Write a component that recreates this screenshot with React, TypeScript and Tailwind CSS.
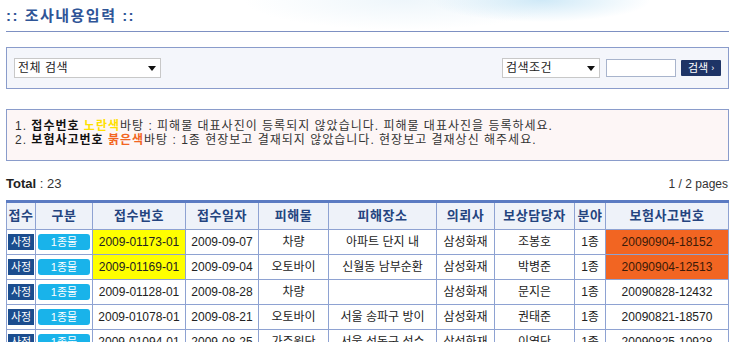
import React from 'react';

type Row = {
  no: string;
  date: string;
  item: string;
  place: string;
  company: string;
  manager: string;
  kind: string;
  accident: string;
  noPhoto?: boolean;
  noReport?: boolean;
};

const ROWS: Row[] = [
  { no: '2009-01173-01', date: '2009-09-07', item: '차량', place: '아파트 단지 내', company: '삼성화재', manager: '조봉호', kind: '1종', accident: '20090904-18152', noPhoto: true, noReport: true },
  { no: '2009-01169-01', date: '2009-09-04', item: '오토바이', place: '신월동 남부순환', company: '삼성화재', manager: '박병준', kind: '1종', accident: '20090904-12513', noPhoto: true, noReport: true },
  { no: '2009-01128-01', date: '2009-08-28', item: '차량', place: '', company: '삼성화재', manager: '문지은', kind: '1종', accident: '20090828-12432' },
  { no: '2009-01078-01', date: '2009-08-21', item: '오토바이', place: '서울 송파구 방이', company: '삼성화재', manager: '권태준', kind: '1종', accident: '20090821-18570' },
  { no: '2009-01094-01', date: '2009-08-25', item: '가주원단', place: '서울 성동구 성수', company: '삼성화재', manager: '이영단', kind: '1종', accident: '20090825-10928' },
];

const HEADERS = ['접수', '구분', '접수번호', '접수일자', '피해물', '피해장소', '의뢰사', '보상담당자', '분야', '보험사고번호'];
const WIDTHS = [29, 57, 93, 73, 70, 108, 58, 80, 31, 123];

const FONT = "font-['Liberation_Sans','Noto_Sans_CJK_KR',sans-serif]";

function Arrow() {
  return (
    <svg width="8" height="5" viewBox="0 0 8 5" className="shrink-0">
      <path d="M0 0h8L4 5z" fill="#111" />
    </svg>
  );
}

export default function App() {
  return (
    <div className={`w-[733px] h-[342px] overflow-hidden bg-white ${FONT} text-[12px] text-[#333]`}>
      <div className="px-[6px] pr-[4px]">
        {/* title */}
        <div className="h-[32px] border-b border-[#7d90c2] bg-[radial-gradient(ellipse_110px_22px_at_74%_0%,#cfe9f7,transparent),radial-gradient(ellipse_160px_30px_at_55%_0%,#eef6fb,transparent)] pt-[5px]">
          <span className="text-[15px] font-bold text-[#2f5597] tracking-[1.5px]">:: 조사내용입력 ::</span>
        </div>

        {/* search */}
        <div className="mt-[15px] h-[42px] border border-[#8a9ccb] bg-[#f4f6fb] flex items-center px-[7px]">
          <div className="w-[147px] h-[20px] bg-white border border-[#c8c8c8] flex items-center justify-between pl-[3px] pr-[4px]">
            <span className="text-[12px] text-[#222] tracking-[0.5px]">전체 검색</span>
            <Arrow />
          </div>
          <div className="ml-auto flex items-center">
            <div className="w-[98px] h-[20px] bg-white border border-[#c8c8c8] flex items-center justify-between pl-[3px] pr-[4px]">
              <span className="text-[12px] text-[#222] tracking-[0.5px]">검색조건</span>
              <Arrow />
            </div>
            <div className="ml-[6px] w-[70px] h-[18px] bg-white border border-[#a8b4cc]" />
            <div className="ml-[5px] w-[40px] h-[16px] bg-[#1e3466] text-white text-[11px] leading-[16px] flex items-center justify-center rounded-[1px]">
              검색 <span className="ml-[3px] text-[9px]">›</span>
            </div>
          </div>
        </div>

        {/* notice */}
        <div className="mt-[20px] h-[52px] border border-[#8a9ccb] bg-[#fdf6f6] pl-[8px] pt-[9px] text-[12px] leading-[14px] tracking-[1px] text-[#333]">
          <div>
            1. <b className="text-[#111]">접수번호</b> <b className="text-[#ffe000]">노란색</b>바탕 : 피해물 대표사진이 등록되지 않았습니다. 피해물 대표사진을 등록하세요.
          </div>
          <div>
            2. <b className="text-[#111]">보험사고번호</b> <b className="text-[#f26522]">붉은색</b>바탕 : 1종 현장보고 결재되지 않았습니다. 현장보고 결재상신 해주세요.
          </div>
        </div>

        {/* total */}
        <div className="mt-[17px] flex items-end justify-between h-[15px]">
          <div className="text-[13px] text-[#333]">
            <b className="text-[#222]">Total</b> : 23
          </div>
          <div className="text-[12px] text-[#333] pr-[1px]">1 / 2 pages</div>
        </div>

        {/* table */}
        <table className="mt-[7px] w-[722px] table-fixed border-collapse border-t-[3px] border-t-[#5b7bc2]">
          <colgroup>
            {WIDTHS.map((w, i) => (
              <col key={i} style={{ width: w }} />
            ))}
          </colgroup>
          <thead>
            <tr className="h-[28px] bg-[#eef2f9]">
              {HEADERS.map((h) => (
                <th key={h} className="border border-[#8ea2d2] border-t-0 p-0 text-center text-[13px] font-bold text-[#24447f] whitespace-nowrap overflow-hidden tracking-[0.5px]">
                  {h}
                </th>
              ))}
            </tr>
          </thead>
          <tbody>
            {ROWS.map((r) => (
              <tr key={r.no} className="h-[25px] text-[12px] text-[#222]">
                <td className="border border-[#8ea2d2] px-[1px] py-0">
                  <div className="h-[16px] bg-[#1b4d8e] text-white text-[11px] leading-[16px] text-center">사정</div>
                </td>
                <td className="border border-[#8ea2d2] px-[2px] py-0">
                  <div className="h-[16px] rounded-[3px] bg-[#19b3ea] text-white text-[11px] leading-[16px] text-center">1종물</div>
                </td>
                <td className={`border border-[#8ea2d2] p-0 text-center ${r.noPhoto ? 'bg-[#ffff00]' : ''}`}>{r.no}</td>
                <td className="border border-[#8ea2d2] p-0 text-center">{r.date}</td>
                <td className="border border-[#8ea2d2] p-0 text-center">{r.item}</td>
                <td className="border border-[#8ea2d2] p-0 text-center whitespace-nowrap overflow-hidden">{r.place}</td>
                <td className="border border-[#8ea2d2] p-0 text-center">{r.company}</td>
                <td className="border border-[#8ea2d2] p-0 text-center">{r.manager}</td>
                <td className="border border-[#8ea2d2] p-0 text-center">{r.kind}</td>
                <td className={`border border-[#8ea2d2] p-0 text-center ${r.noReport ? 'bg-[#f26522] text-[#3a1a08]' : ''}`}>{r.accident}</td>
              </tr>
            ))}
          </tbody>
        </table>
      </div>
    </div>
  );
}
